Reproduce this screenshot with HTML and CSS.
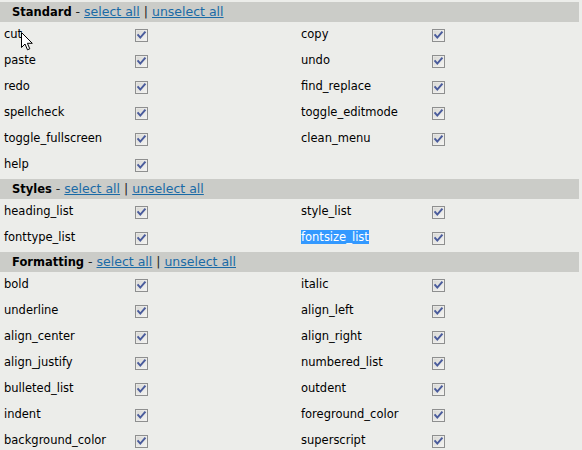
FILE: index.html
```html
<!DOCTYPE html>
<html>
<head>
<meta charset="utf-8">
<link rel="stylesheet" href="styles.css">
</head>
<body>
<svg width="0" height="0" class="defs">
  <defs>
    <linearGradient id="cbfill" x1="0" y1="0" x2="1" y2="1">
      <stop offset="0" stop-color="#d8d8d4"/>
      <stop offset="1" stop-color="#f4f4f2"/>
    </linearGradient>
    <symbol id="cb" viewBox="0 0 13 13">
      <rect x="0.5" y="0.5" width="12" height="12" fill="#f0f0ee" stroke="#8e8f8f"/>
      <rect x="1.5" y="1.5" width="10" height="10" fill="url(#cbfill)"/>
      <path d="M3.2 6.2 L5.3 8.6 L9.8 3.4" fill="none" stroke="#4a5c9c" stroke-width="2" stroke-linecap="square"/>
    </symbol>
  </defs>
</svg>
<div class="panel">
  <div class="sec-head"><b>Standard</b> - <a href="#">select all</a> | <a href="#">unselect all</a></div>
  <div class="lbl">cut</div><div class="chk"><svg class="cb"><use href="#cb"/></svg></div>
  <div class="lbl">copy</div><div class="chk"><svg class="cb"><use href="#cb"/></svg></div>
  <div class="lbl">paste</div><div class="chk"><svg class="cb"><use href="#cb"/></svg></div>
  <div class="lbl">undo</div><div class="chk"><svg class="cb"><use href="#cb"/></svg></div>
  <div class="lbl">redo</div><div class="chk"><svg class="cb"><use href="#cb"/></svg></div>
  <div class="lbl">find_replace</div><div class="chk"><svg class="cb"><use href="#cb"/></svg></div>
  <div class="lbl">spellcheck</div><div class="chk"><svg class="cb"><use href="#cb"/></svg></div>
  <div class="lbl">toggle_editmode</div><div class="chk"><svg class="cb"><use href="#cb"/></svg></div>
  <div class="lbl">toggle_fullscreen</div><div class="chk"><svg class="cb"><use href="#cb"/></svg></div>
  <div class="lbl">clean_menu</div><div class="chk"><svg class="cb"><use href="#cb"/></svg></div>
  <div class="lbl">help</div><div class="chk"><svg class="cb"><use href="#cb"/></svg></div>
  <div class="lbl"></div><div class="chk"></div>

  <div class="sec-head"><b>Styles</b> - <a href="#">select all</a> | <a href="#">unselect all</a></div>
  <div class="lbl">heading_list</div><div class="chk"><svg class="cb"><use href="#cb"/></svg></div>
  <div class="lbl">style_list</div><div class="chk"><svg class="cb"><use href="#cb"/></svg></div>
  <div class="lbl">fonttype_list</div><div class="chk"><svg class="cb"><use href="#cb"/></svg></div>
  <div class="lbl"><span class="sel">fontsize_list</span></div><div class="chk"><svg class="cb"><use href="#cb"/></svg></div>

  <div class="sec-head"><b>Formatting</b> - <a href="#">select all</a> | <a href="#">unselect all</a></div>
  <div class="lbl">bold</div><div class="chk"><svg class="cb"><use href="#cb"/></svg></div>
  <div class="lbl">italic</div><div class="chk"><svg class="cb"><use href="#cb"/></svg></div>
  <div class="lbl">underline</div><div class="chk"><svg class="cb"><use href="#cb"/></svg></div>
  <div class="lbl">align_left</div><div class="chk"><svg class="cb"><use href="#cb"/></svg></div>
  <div class="lbl">align_center</div><div class="chk"><svg class="cb"><use href="#cb"/></svg></div>
  <div class="lbl">align_right</div><div class="chk"><svg class="cb"><use href="#cb"/></svg></div>
  <div class="lbl">align_justify</div><div class="chk"><svg class="cb"><use href="#cb"/></svg></div>
  <div class="lbl">numbered_list</div><div class="chk"><svg class="cb"><use href="#cb"/></svg></div>
  <div class="lbl">bulleted_list</div><div class="chk"><svg class="cb"><use href="#cb"/></svg></div>
  <div class="lbl">outdent</div><div class="chk"><svg class="cb"><use href="#cb"/></svg></div>
  <div class="lbl">indent</div><div class="chk"><svg class="cb"><use href="#cb"/></svg></div>
  <div class="lbl">foreground_color</div><div class="chk"><svg class="cb"><use href="#cb"/></svg></div>
  <div class="lbl">background_color</div><div class="chk"><svg class="cb"><use href="#cb"/></svg></div>
  <div class="lbl">superscript</div><div class="chk"><svg class="cb"><use href="#cb"/></svg></div>
</div>
<svg class="cursor" width="13" height="20" viewBox="0 0 13 20">
  <path d="M0.5 0.5 L0.5 15.5 L4 12 L6.5 17.8 L8.8 16.8 L6.4 11.3 L11.3 11.3 Z" fill="#fff" stroke="#000" stroke-width="1" stroke-linejoin="miter"/>
</svg>
</body>
</html>
```
FILE: styles.css
```css
html, body {
  margin: 0;
  padding: 0;
  overflow: hidden;
  background: #ecedea;
}
body {
  font-family: "DejaVu Sans", Verdana, sans-serif;
  font-size: 11.5px;
  color: #000;
  position: relative;
}
.defs {
  position: absolute;
  width: 0;
  height: 0;
}
.panel {
  width: 579px;
  padding-top: 2px;
  display: grid;
  grid-template-columns: 135px 162px 135px 1fr;
  row-gap: 1px;
}
.sec-head {
  grid-column: 1 / -1;
  height: 20px;
  line-height: 20px;
  background: #cbccc8;
  padding-left: 12px;
  font-size: 12.5px;
  color: #222;
}
.sec-head b {
  color: #000;
  font-size: 11.5px;
}
.sec-head a {
  color: #1a6aa6;
  text-decoration: underline;
}
.lbl {
  height: 25px;
  padding-left: 4px;
  padding-top: 5px;
  box-sizing: border-box;
  line-height: 13px;
  white-space: nowrap;
}
.chk {
  height: 25px;
  display: flex;
  align-items: center;
}
.cb {
  width: 13px;
  height: 13px;
  display: block;
}
.sel {
  background: #3399ff;
  color: #fff;
}
.cursor {
  position: absolute;
  left: 21px;
  top: 32px;
}
```
